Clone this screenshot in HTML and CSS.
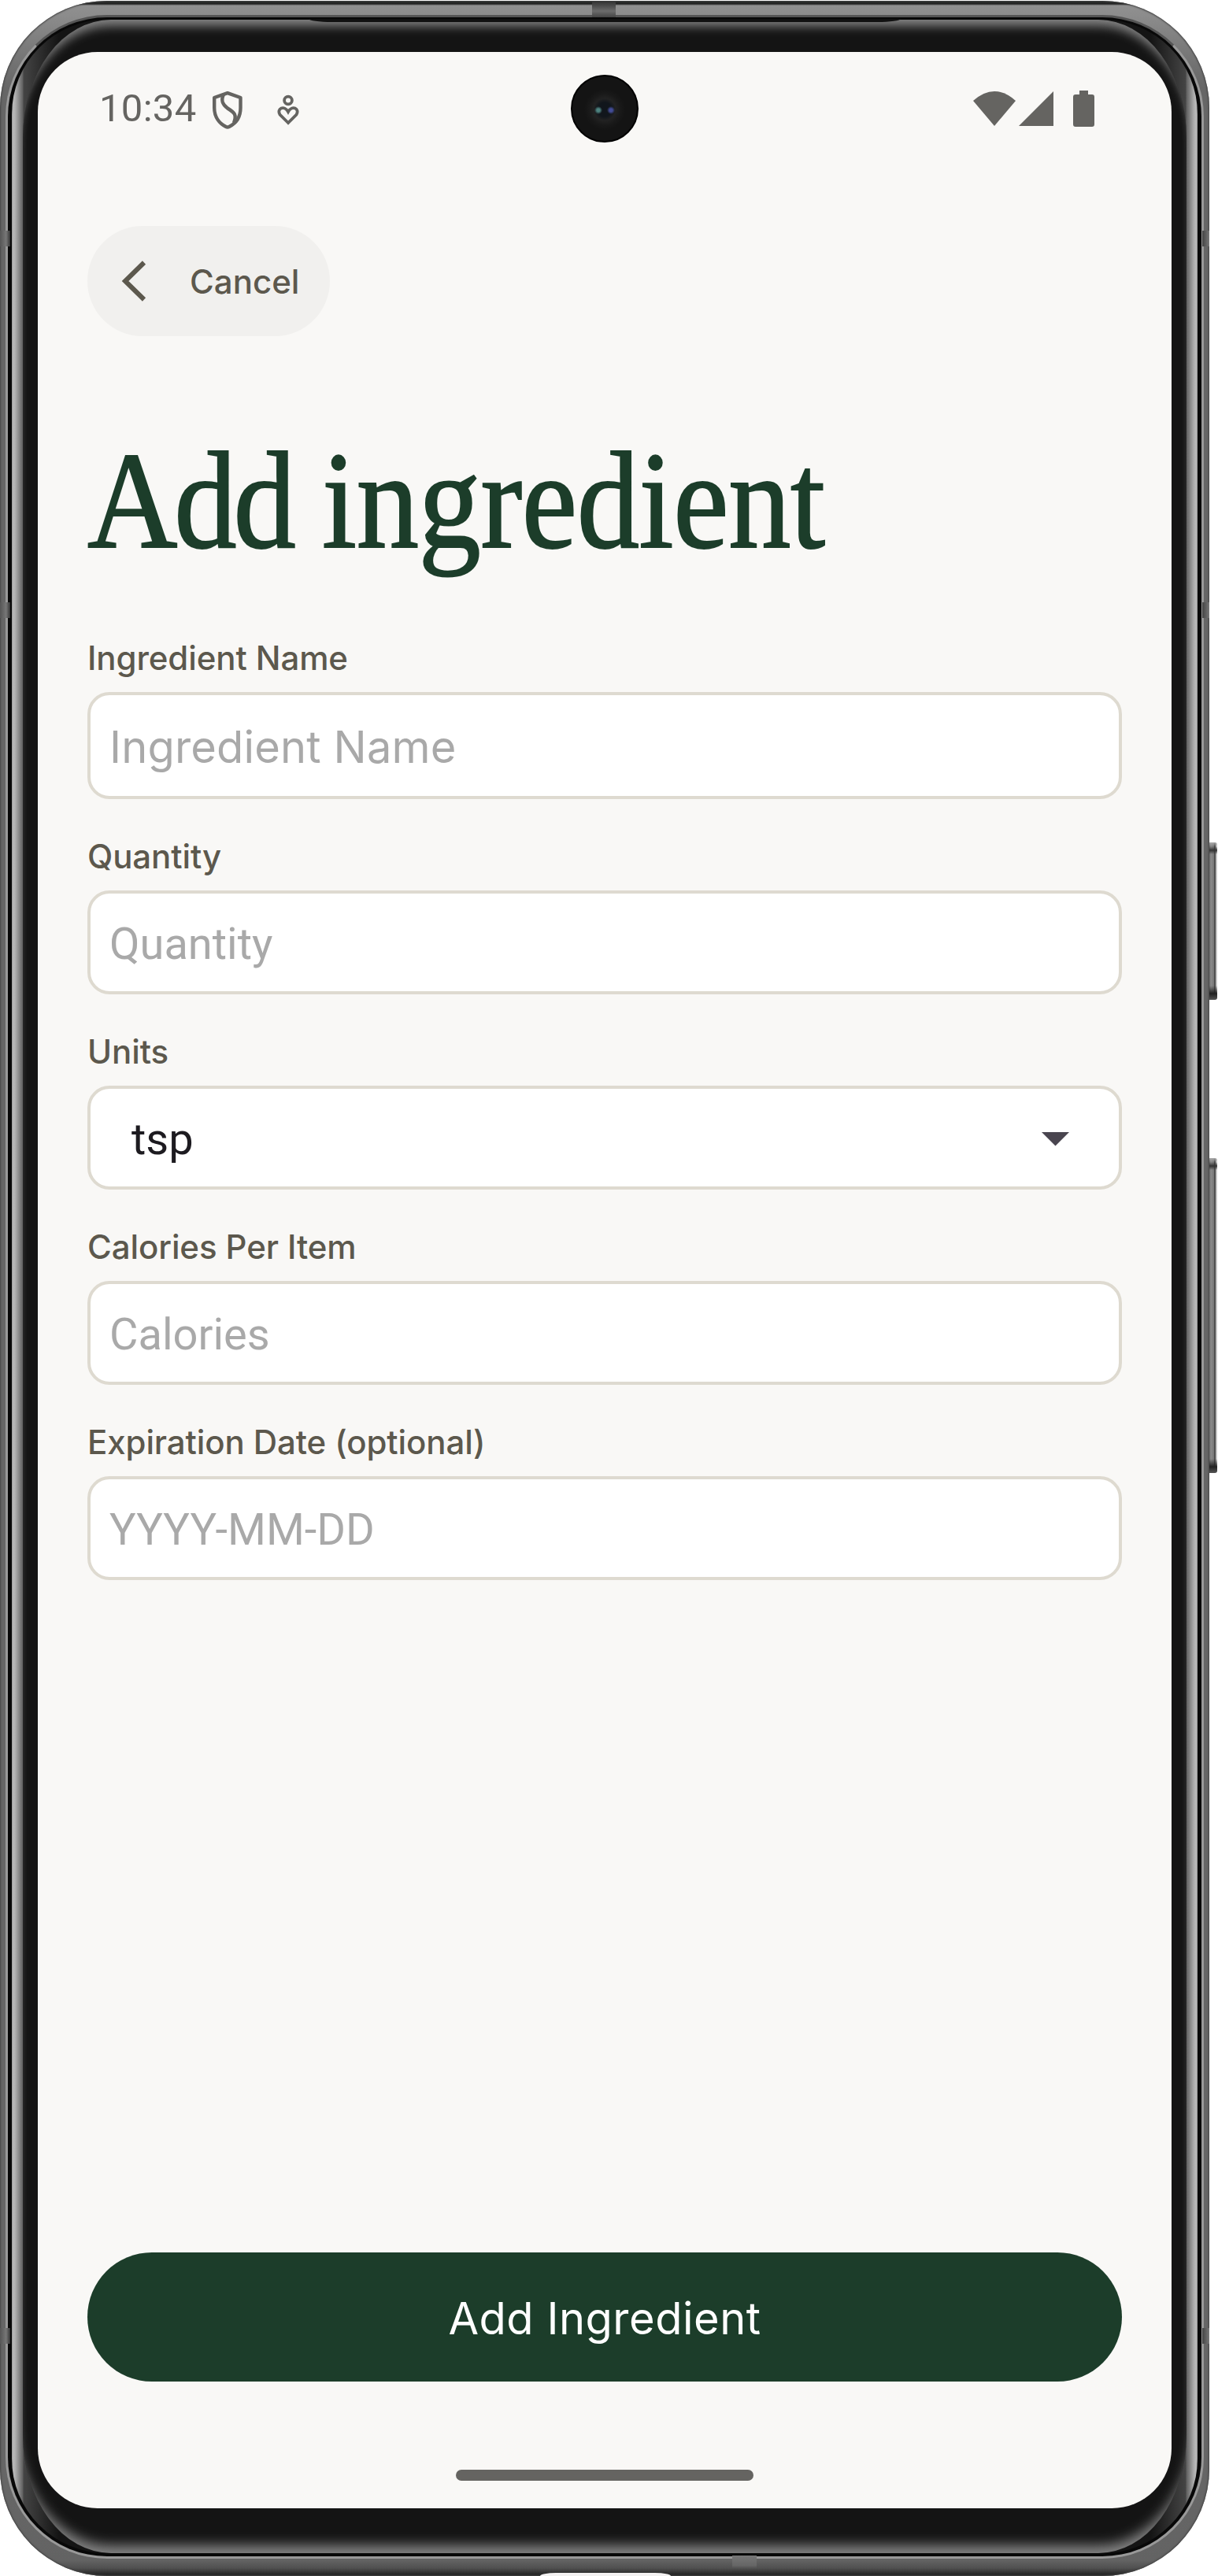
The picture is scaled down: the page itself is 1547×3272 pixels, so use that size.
FILE: index.html
```html
<!DOCTYPE html>
<html lang="en">
<head>
<meta charset="utf-8">
<title>Add ingredient</title>
<link rel="stylesheet" href="styles.css">
</head>
<body>
<div class="device">
  <span class="side-key power"></span>
  <span class="side-key volume"></span>
  <div class="rail">
    <div class="groove">
      <div class="glass">
        <div class="bezel">
        <main class="screen">
          <header class="status">
            <span class="clock">10:34</span>
            <svg class="shield" width="40" height="50" viewBox="0 0 40 50" fill="none" stroke="#656461" stroke-width="4.4" stroke-linejoin="round">
              <path d="M20 3.200 36.500 9V22C36.500 34 30 42 22 46Q20 47 18 46C10 42 3.200 34 3.200 22V9Z"/>
              <path d="M15 5C11 13 14 18 20 22.500C29 28 32 31 28 41"/>
            </svg>
            <svg class="wellbeing" width="28" height="40" viewBox="0 0 28 40" fill="none" stroke="#656461" stroke-width="3.8">
              <circle cx="14" cy="7.500" r="4.900"/>
              <path d="M14 36 3.500 25.500C-1 18 9 13 14 22C19 13 29 18 24.500 25.500Z"/>
            </svg>
            <span class="spacer"></span>
            <svg class="wifi" width="54" height="46" viewBox="0 0 54 46" fill="#656461"><path d="M0 13Q27-11 54 13L27 45Z"/></svg>
            <svg class="signal" width="44" height="46" viewBox="0 0 44 46" fill="#656461"><path d="M44 1V45H0Z"/></svg>
            <svg class="battery" width="27" height="46" viewBox="0 0 27 46" fill="#656461"><path d="M8 0H19V5H24Q27 5 27 8V43Q27 46 24 46H3Q0 46 0 43V8Q0 5 3 5H8Z"/></svg>
          </header>
          <button class="cancel" type="button">
            <svg width="32" height="52" viewBox="0 0 32 52" fill="none" stroke="#5c584d" stroke-width="6"><path d="M29 2.500 5 26 29 49.500"/></svg>
            <span>Cancel</span>
          </button>
          <h1 class="title"><span class="tight">Add</span> ingredient</h1>
          <form class="form">
            <label class="label" for="name">Ingredient Name</label>
            <div class="field tall"><input id="name" class="input inter" placeholder="Ingredient Name"></div>
            <label class="label" for="qty">Quantity</label>
            <div class="field"><input id="qty" class="input" placeholder="Quantity"></div>
            <label class="label" for="units">Units</label>
            <div class="field select" id="units"><span>tsp</span><svg width="35" height="18" viewBox="0 0 35 18"><path d="M0 0H35L17.500 17.500Z" fill="#49454f"/></svg></div>
            <label class="label" for="cal">Calories Per Item</label>
            <div class="field"><input id="cal" class="input" placeholder="Calories"></div>
            <label class="label" for="exp">Expiration Date (optional)</label>
            <div class="field"><input id="exp" class="input" placeholder="YYYY-MM-DD"></div>
          </form>
          <button class="submit" type="button">Add Ingredient</button>
          <div class="home"></div>
        </main>
        </div>
      </div>
    </div>
  </div>
  <span class="camera"></span>
  <span class="lip"></span>
  <span class="seam seam-top"></span>
  <span class="seam seam-bottom"></span>
  <span class="seam left upper"></span>
  <span class="seam left middle"></span>
  <span class="seam left lower"></span>
  <span class="seam right upper"></span>
  <span class="seam right middle"></span>
  <span class="seam right lower"></span>
  <span class="port"></span>
</div>
</body>
</html>
```
FILE: styles.css
```css
* { box-sizing: border-box; }
body { margin: 0; background: #fff; width: 1547px; height: 3272px; overflow: hidden; font-family: Inter, "Liberation Sans", sans-serif; }

/* Phone body, from the metal rail in to the glass */
.device { position: relative; width: 1536px; height: 3272px; padding-top: 1px; }
.rail { position: relative; height: 3271px; padding: 18px 7px 22px; border-radius: 136px; background: linear-gradient(#2a2d2b 0, #222 4px, #909090 6px, #8c8c8c 18px, #666 110px, #666 calc(100% - 110px), #636363 calc(100% - 20px), #505050 calc(100% - 10px), #1a1a1a 100%); box-shadow: inset 0 0 2px 1px #444; }
.groove { height: 100%; padding: 3px 5px 4px; border: 3px solid #999; border-top-color: #555; border-radius: 129px; background: #080808; }
.glass { height: 100%; border-radius: 120px; background: linear-gradient(90deg, #999 0, #bbb 2px, #aaa 5px, #606060 14px, #444 15px, #141414 60px, #141414 calc(100% - 60px), #444 calc(100% - 15px), #606060 calc(100% - 14px), #aaa calc(100% - 5px), #bbb calc(100% - 2px), #999 100%); overflow: hidden; }
.bezel { height: 100%; margin: 0 14px; padding: 41px 19px 0; border-radius: 112px / 150px; background: #141414; box-shadow: inset 0 17px 13px -9px #858585, inset 0 -19px 16px -9px #858585; }
.screen { display: flex; flex-direction: column; width: 1440px; height: 3120px; padding: 0 63px; border-radius: 76px; background: #f9f8f6; }
.lip { position: absolute; left: 392px; top: 24px; width: 752px; height: 4px; border-radius: 0 0 30px 30px / 0 0 4px 4px; background: #111; }
.seam { position: absolute; background: #666; }
.seam-top { left: 752px; top: 2px; width: 30px; height: 20px; background: linear-gradient(#333, #6c6c6c 60%, #444); }
.seam-bottom { left: 930px; top: 3246px; width: 31px; height: 21px; background: linear-gradient(#777, #666 60%, #333); }
.left { left: 0; width: 13px; height: 20px; background: linear-gradient(90deg, #555, #777 60%, #333); }
.right { left: 1527px; width: 9px; height: 20px; background: linear-gradient(90deg, #444, #777); }
.upper { top: 293px; }
.middle { top: 765px; }
.lower { top: 2957px; }
.port { position: absolute; left: 686px; top: 3268px; width: 166px; height: 4px; border-radius: 20px 20px 0 0 / 4px 4px 0 0; background: #f4f2f2; }
.camera { position: absolute; left: 725px; top: 95px; width: 86px; height: 86px; border-radius: 50%; border: 2px solid #000; background: radial-gradient(circle at 33px 43px, #4d827f 0 2px, transparent 5px), radial-gradient(circle at 49px 43px, #434c96 0 2px, transparent 5px), radial-gradient(circle at 41px 42px, #11161c 0 9px, #222 14px, #191919 20px, #141414 26px); }
.side-key { position: absolute; left: 1533px; width: 13px; border-radius: 3px; background: linear-gradient(#aaa, transparent 5px, #333 10px, transparent 15px, transparent calc(100% - 18px), #222 calc(100% - 8px), #555 100%), linear-gradient(90deg, #444, #8a8a8a 40%, #777 68%, #2a2a2a 78%, #ccc 90%); }
.power { top: 1070px; height: 200px; }
.volume { top: 1471px; height: 400px; }

/* Status bar */
.status { display: flex; align-items: flex-start; height: 221px; padding: 49px 35px 0 15px; }
.clock { width: 126px; margin-top: -6px; font: 49px/58px Roboto, sans-serif; letter-spacing: .3px; color: #656461; }
.shield { margin-left: 17px; }
.wellbeing { margin: 5px 0 0 43px; }
.spacer { flex: 1; }
.signal { margin: 0 25px 0 4px; }

/* Page */
.cancel { display: flex; align-items: center; width: 308px; height: 140px; padding: 0 0 0 43px; border: 0; border-radius: 70px; background: #f1f0ee; color: #5c584d; font: 500 42px/51px Inter, sans-serif; flex: none; }
.cancel span { margin-left: 55px; }
.title { height: 200px; margin: 109px 0 0; font: 400 176px/200px "Liberation Serif", serif; letter-spacing: -.4px; word-spacing: -2px; color: #1c3d2a; -webkit-text-stroke: 2px #1c3d2a; white-space: nowrap; transform: scaleX(.9); transform-origin: left; }
.tight { letter-spacing: -4.5px; }
.form { display: flex; flex-direction: column; margin-top: 74px; }
.label { height: 51px; margin-bottom: 18px; font: 500 42px/51px Inter, sans-serif; letter-spacing: -.1px; color: #5c584d; }
.field { display: flex; align-items: center; height: 132px; margin-bottom: 47px; padding: 4px 24px 0; border: 4px solid #dedad0; border-radius: 28px; background: #fff; }
.tall { height: 136px; }
.input { width: 100%; padding: 0; border: 0; outline: 0; background: none; font: 56px/66px Roboto, sans-serif; }
.inter { font-family: Inter, sans-serif; letter-spacing: .15px; }
.input::placeholder { color: #a9a9a9; opacity: 1; }
.select { justify-content: space-between; padding: 4px 63px 0 52px; font: 56px/66px Roboto, sans-serif; color: #1d1b20; }
.submit { height: 164px; margin: auto 0 112px; padding: 4px 0 0; border: 0; border-radius: 82px; background: #1c3d2a; color: #fff; font: 400 56px/68px Inter, sans-serif; letter-spacing: .5px; flex: none; }
.home { align-self: center; width: 378px; height: 14px; margin-bottom: 35px; border-radius: 7px; background: #656461; flex: none; }
```
